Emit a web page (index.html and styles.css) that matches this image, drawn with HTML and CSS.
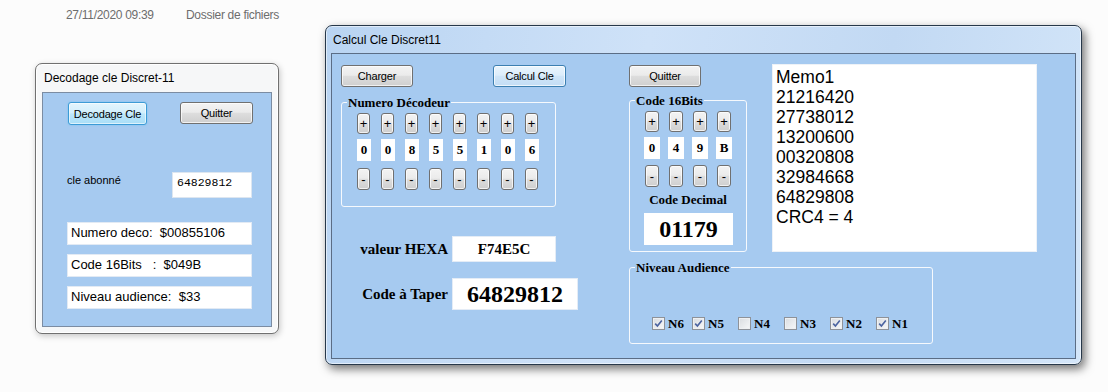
FILE: index.html
```html
<!DOCTYPE html>
<html lang="fr">
<head>
    <meta charset="UTF-8">
    <title>Calcul Cle Discret11</title>
    <link rel="stylesheet" href="styles.css">
</head>
<body>
<div class="desktop">
    <div class="file-row">
        <span class="file-date">27/11/2020 09:39</span>
        <span class="file-type">Dossier de fichiers</span>
    </div>

    <!-- petite fenetre : decodage -->
    <div class="window win-decode">
        <div class="titlebar">Decodage cle Discret-11</div>
        <div class="client">
            <div class="btn-row">
                <button type="button" class="btn btn-focus btn-decode">Decodage Cle</button>
                <button type="button" class="btn btn-quit">Quitter</button>
            </div>
            <div class="abonne-row">
                <span class="abonne-label">cle abonné</span>
                <div class="edit-mono">64829812</div>
            </div>
            <div class="info">Numero deco:  $00855106</div>
            <div class="info">Code 16Bits   :  $049B</div>
            <div class="info">Niveau audience:  $33</div>
        </div>
    </div>

    <!-- grande fenetre : calcul -->
    <div class="window win-calc">
        <div class="titlebar">Calcul Cle Discret11</div>
        <div class="client">
            <div class="col-left">
                <div class="btn-pair">
                    <button type="button" class="btn btn-wide">Charger</button>
                    <button type="button" class="btn btn-wide btn-default">Calcul Cle</button>
                </div>

                <div class="group group-deco">
                    <span class="legend">Numero Décodeur</span>
                    <div class="pm-row">
                        <button type="button" class="btn pm">+</button>
                        <button type="button" class="btn pm">+</button>
                        <button type="button" class="btn pm">+</button>
                        <button type="button" class="btn pm">+</button>
                        <button type="button" class="btn pm">+</button>
                        <button type="button" class="btn pm">+</button>
                        <button type="button" class="btn pm">+</button>
                        <button type="button" class="btn pm">+</button>
                    </div>
                    <div class="digit-row">
                        <span class="digit">0</span>
                        <span class="digit">0</span>
                        <span class="digit">8</span>
                        <span class="digit">5</span>
                        <span class="digit">5</span>
                        <span class="digit">1</span>
                        <span class="digit">0</span>
                        <span class="digit digit-up">6</span>
                    </div>
                    <div class="pm-row minus-row">
                        <button type="button" class="btn pm">-</button>
                        <button type="button" class="btn pm">-</button>
                        <button type="button" class="btn pm">-</button>
                        <button type="button" class="btn pm">-</button>
                        <button type="button" class="btn pm">-</button>
                        <button type="button" class="btn pm">-</button>
                        <button type="button" class="btn pm">-</button>
                        <button type="button" class="btn pm">-</button>
                    </div>
                </div>

                <div class="value-row row-hexa">
                    <span class="value-label">valeur HEXA</span>
                    <div class="value-box hexa">F74E5C</div>
                </div>
                <div class="value-row row-code">
                    <span class="value-label">Code à Taper</span>
                    <div class="value-box big">64829812</div>
                </div>
            </div>

            <div class="col-right">
                <div class="col-mid">
                    <button type="button" class="btn btn-wide">Quitter</button>
                    <div class="group group-16">
                        <span class="legend">Code 16Bits</span>
                        <div class="pm-row">
                            <button type="button" class="btn pm">+</button>
                            <button type="button" class="btn pm">+</button>
                            <button type="button" class="btn pm">+</button>
                            <button type="button" class="btn pm">+</button>
                        </div>
                        <div class="digit-row">
                            <span class="digit">0</span>
                            <span class="digit">4</span>
                            <span class="digit">9</span>
                            <span class="digit">B</span>
                        </div>
                        <div class="pm-row minus-row">
                            <button type="button" class="btn pm">-</button>
                            <button type="button" class="btn pm">-</button>
                            <button type="button" class="btn pm">-</button>
                            <button type="button" class="btn pm">-</button>
                        </div>
                        <div class="dec-label">Code Decimal</div>
                        <div class="dec-box">01179</div>
                    </div>
                </div>

                <div class="memo">Memo1<br>21216420<br>27738012<br>13200600<br>00320808<br>32984668<br>64829808<br>CRC4 = 4</div>

                <div class="group group-audience">
                    <span class="legend">Niveau Audience</span>
                    <div class="checks">
                        <span class="check"><span class="box on"><svg width="9" height="9" viewBox="0 0 9 9"><path d="M1.2 4.6 L3.4 7 L7.8 1.4" /></svg></span>N6</span>
                        <span class="check"><span class="box on"><svg width="9" height="9" viewBox="0 0 9 9"><path d="M1.2 4.6 L3.4 7 L7.8 1.4" /></svg></span>N5</span>
                        <span class="check"><span class="box"></span>N4</span>
                        <span class="check"><span class="box"></span>N3</span>
                        <span class="check"><span class="box on"><svg width="9" height="9" viewBox="0 0 9 9"><path d="M1.2 4.6 L3.4 7 L7.8 1.4" /></svg></span>N2</span>
                        <span class="check"><span class="box on"><svg width="9" height="9" viewBox="0 0 9 9"><path d="M1.2 4.6 L3.4 7 L7.8 1.4" /></svg></span>N1</span>
                    </div>
                </div>
            </div>
        </div>
    </div>
</div>
</body>
</html>
```

FILE: styles.css
```css
* {
    box-sizing: border-box;
}
body {
    margin: 0;
    background: #fcfcfc;
    font-family: "Liberation Sans", Arial, sans-serif;
    color: #000;
}
.desktop {
    position: relative;
    width: 1108px;
    height: 392px;
    overflow: hidden;
}
.file-row {
    display: flex;
    padding: 8px 0 0 66px;
    font-size: 12px;
    letter-spacing: -0.3px;
    color: #6d6d6d;
}
.file-date {
    width: 120px;
}

/* fenetres */
.window {
    position: absolute;
    display: flex;
    flex-direction: column;
    border-radius: 7px;
}
.titlebar {
    height: 28px;
    padding: 5px 0 0 2px;
    font-size: 12px;
    line-height: 18px;
}
.client {
    flex: 1;
    background: #a6caf0;
}
.win-decode {
    left: 35px;
    top: 63px;
    width: 244px;
    height: 271px;
    padding: 0 6px 6px;
    background: #f6f7f8;
    border: 1px solid #707070;
    box-shadow: 1px 2px 6px rgba(0,0,0,0.22), inset 0 0 0 1px #fff;
}
.win-decode .client {
    border: 1px solid #7b8ca2;
    padding: 9px 0 0 24px;
}
.win-calc {
    left: 325px;
    top: 25px;
    width: 757px;
    height: 340px;
    padding: 0 5px 5px;
    background: linear-gradient(100deg, #b9d4f2 0%, #cfe2f8 40%, #c2d9f3 70%, #d4e6f9 100%);
    border: 1px solid #27384a;
    box-shadow: 3px 4px 10px rgba(0,0,0,0.55), inset 0 0 0 1px rgba(255,255,255,0.55);
}
.win-calc .titlebar {
    height: 27px;
}
.win-calc .client {
    display: flex;
    align-items: flex-start;
    border: 1px solid #5b6d85;
    padding: 11px 0 0 9px;
}

/* boutons */
.btn {
    height: 22px;
    padding: 0;
    border: 1px solid #707070;
    border-radius: 3px;
    background: linear-gradient(#f3f3f3, #ebebeb 46%, #dddddd 52%, #cfcfcf);
    box-shadow: inset 0 0 0 1px rgba(255,255,255,0.7);
    font-family: "Liberation Sans", Arial, sans-serif;
    font-size: 11px;
    letter-spacing: -0.2px;
    color: #000;
}
.btn-focus {
    border-color: #3c9bd6;
    background: linear-gradient(#e3f5fd, #d2effc 46%, #bde7fb 52%, #a9def7);
    box-shadow: inset 0 0 0 1px rgba(255,255,255,0.6), 0 0 2px #6fc0ee;
}
.btn-default {
    border-color: #3c7fb1;
    background: linear-gradient(#eaf5fd, #dcedfb 46%, #cfe5f8 52%, #c3ddf5);
}
.btn-wide {
    width: 72px;
}

/* petite fenetre */
.btn-row {
    display: flex;
    align-items: flex-start;
}
.btn-decode {
    width: 79px;
    height: 23px;
    margin-left: 1px;
}
.btn-quit {
    width: 73px;
}
.btn-row .btn-quit {
    margin-left: 33px;
}
.abonne-row {
    display: flex;
    justify-content: space-between;
    width: 185px;
    margin-top: 47px;
}
.abonne-label {
    padding-top: 2px;
    font-size: 11px;
    line-height: 13px;
}
.edit-mono {
    width: 80px;
    height: 26px;
    padding: 3px 0 0 4px;
    background: #fff;
    border: 1px solid #dde6f0;
    font-family: "Liberation Mono", "Courier New", monospace;
    font-size: 11.5px;
    line-height: 14px;
}
.info {
    width: 185px;
    height: 23px;
    margin-top: 9px;
    padding-left: 3px;
    background: #fff;
    border: 1px solid #e2eaf4;
    font-size: 13px;
    line-height: 20px;
    white-space: pre;
}
.abonne-row + .info {
    margin-top: 24px;
}

/* grande fenetre */
.col-left {
    display: flex;
    flex-direction: column;
    align-items: flex-start;
    width: 225px;
    flex-shrink: 0;
}
.btn-pair {
    display: flex;
    justify-content: space-between;
    width: 225px;
}
.btn-pair .btn-default {
    width: 73px;
}
.group {
    position: relative;
    border: 1px solid #f6f9fd;
    border-radius: 3px;
}
.legend {
    position: absolute;
    top: -8px;
    left: 5px;
    padding: 0 1px;
    background: #a6caf0;
    font-family: "Liberation Serif", "Times New Roman", serif;
    font-weight: bold;
    font-size: 13px;
    line-height: 15px;
}
.group-deco {
    width: 215px;
    height: 105px;
    margin-top: 15px;
    padding: 10px 0 0 15px;
}
.pm-row {
    display: flex;
    gap: 11px;
}
.pm {
    width: 13px;
    height: 21px;
    font-size: 13px;
    letter-spacing: 0;
    line-height: 17px;
}
.minus-row {
    margin-top: 7px;
}
.minus-row .pm {
    height: 22px;
}
.digit-row {
    display: flex;
    gap: 10px;
    margin-top: 5px;
}
.digit {
    display: flex;
    align-items: center;
    justify-content: center;
    width: 14px;
    height: 22px;
    background: #fff;
    font-family: "Liberation Serif", "Times New Roman", serif;
    font-weight: bold;
    font-size: 13px;
}
.digit-up {
    align-items: flex-start;
    padding-top: 3px;
}
.value-row {
    display: flex;
    align-items: center;
    font-family: "Liberation Serif", "Times New Roman", serif;
    font-weight: bold;
}
.value-label {
    flex-shrink: 0;
    width: 111px;
    padding-right: 4px;
    text-align: right;
    font-size: 15px;
}
.value-box {
    display: flex;
    flex-shrink: 0;
    align-items: center;
    justify-content: center;
    background: #fff;
    border: 1px solid #e4ecf6;
}
.row-hexa {
    margin-top: 29px;
}
.hexa {
    width: 104px;
    height: 26px;
    font-size: 15px;
}
.row-code {
    margin-top: 16px;
}
.big {
    width: 126px;
    height: 32px;
    font-size: 24px;
}

.col-right {
    display: grid;
    grid-template-columns: 118px 265px;
    column-gap: 25px;
    align-items: start;
    align-content: start;
    margin-left: 63px;
}
.col-mid {
    display: flex;
    flex-direction: column;
    align-items: flex-start;
}
.group-16 {
    width: 118px;
    margin-top: 13px;
    padding: 10px 0 6px 15px;
}
.group-16 .pm-row {
    gap: 10px;
}
.group-16 .pm {
    width: 14px;
}
.group-16 .digit-row {
    gap: 8px;
    margin-left: -1px;
}
.group-16 .digit {
    width: 16px;
}
.group-16 .minus-row {
    margin-top: 6px;
}
.dec-label {
    margin: 5px 0 0 -15px;
    text-align: center;
    font-family: "Liberation Serif", "Times New Roman", serif;
    font-weight: bold;
    font-size: 13px;
    line-height: 15px;
}
.dec-box {
    display: flex;
    align-items: center;
    justify-content: center;
    width: 89px;
    height: 32px;
    margin: 6px 0 0 -1px;
    background: #fff;
    font-family: "Liberation Serif", "Times New Roman", serif;
    font-weight: bold;
    font-size: 24px;
}
.memo {
    height: 188px;
    margin-top: -1px;
    padding: 2px 0 0 3px;
    background: #fff;
    border: 1px solid #eef2f7;
    font-size: 17.5px;
    line-height: 20px;
}
.group-audience {
    grid-column: 1 / span 2;
    width: 304px;
    height: 77px;
    margin-top: 15px;
    padding: 49px 0 0 22px;
}
.checks {
    display: grid;
    grid-template-columns: 40px 46px 46px 46px 46px auto;
}
.check {
    display: flex;
    align-items: center;
    font-family: "Liberation Serif", "Times New Roman", serif;
    font-weight: bold;
    font-size: 13px;
    line-height: 13px;
}
.box {
    display: flex;
    align-items: center;
    justify-content: center;
    width: 13px;
    height: 13px;
    margin-right: 3px;
    border: 1px solid #8e9299;
    background: linear-gradient(135deg, #d9dce0, #f7f8f9);
    box-shadow: inset 0 0 0 1px #eef0f2;
}
.box path {
    fill: none;
    stroke: #4b63a0;
    stroke-width: 1.6;
}
```
